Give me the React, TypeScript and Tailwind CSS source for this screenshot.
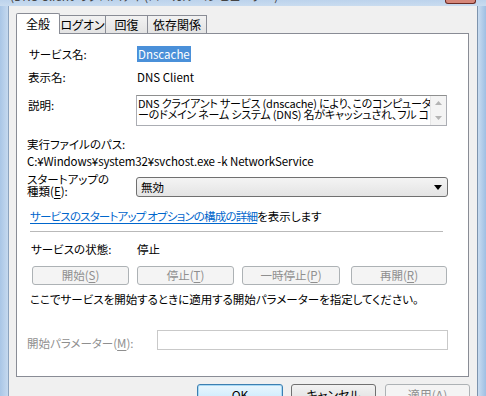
const FONT = "font-['Noto_Sans_CJK_JP','Noto_Sans',sans-serif] [font-feature-settings:'palt']";

const TABS = [
  { label: '全般', width: 'w-[44px]', active: true },
  { label: 'ログオン', width: 'w-[46px]', active: false },
  { label: '回復', width: 'w-[42px]', active: false },
  { label: '依存関係', width: 'w-[59px]', active: false },
];

function Mn({ k }: { k: string }) {
  return (
    <>
      (<span className="underline underline-offset-2">{k}</span>)
    </>
  );
}

function DisabledButton({ className, children }: { className: string; children: React.ReactNode }) {
  return (
    <div
      className={`h-[19px] rounded-[3px] border border-[#adb2b5] bg-[#f4f4f4] text-[#8f8f8f] leading-[17px] text-center ${className}`}
    >
      {children}
    </div>
  );
}

export default function App() {
  return (
    <div className={`w-[486px] h-[396px] overflow-hidden flex flex-col bg-[#b7cfe9] text-black ${FONT}`}>
      {/* title bar bottom edge */}
      <div className="h-[6px] shrink-0 flex items-start overflow-hidden bg-gradient-to-b from-[#bcd3ec] to-[#c9dcef]">
        <div className="ml-[10px] -mt-[10px] text-[12px] leading-[12px] text-[#444] whitespace-nowrap">
          (DNS Client のプロパティ (ローカル コンピューター)
        </div>
        <div className="ml-auto mr-[10px] w-[31px] h-[4px] bg-[#d6877a] border-x border-b border-[#6b2b25] rounded-b-[3px]" />
      </div>

      <div className="flex flex-1 min-h-0 overflow-hidden">
        {/* left frame */}
        <div className="w-[8px] shrink-0 bg-gradient-to-r from-[#a9c6e6] to-[#c5d9ef]" />

        {/* dialog body */}
        <div className="w-[469px] shrink-0 bg-[#f0f0f0] border-l border-[#8ca3be] pl-[7px] pt-[7px]">
          {/* tabs */}
          <div className="relative z-10 flex items-end h-[20px] text-[12px]">
            {TABS.map((t) =>
              t.active ? (
                <div
                  key={t.label}
                  className={`${t.width} h-[21px] -mb-px bg-white border-l border-t border-r border-[#898c95] rounded-t-[2px] leading-[19px] text-center`}
                >
                  {t.label}
                </div>
              ) : (
                <div
                  key={t.label}
                  className={`${t.width} h-[18px] border-t border-r border-[#898c95] bg-gradient-to-b from-[#f2f2f2] to-[#e3e3e3] leading-[17px] text-center`}
                >
                  {t.label}
                </div>
              )
            )}
          </div>

          {/* tab panel */}
          <div className="w-[453px] h-[344px] border border-[#898c95] bg-white pl-[10px] text-[11.5px]">
            <div className="flex h-[16px] mt-[12px] leading-[16px]">
              <div className="w-[109px] pl-[2px]">サービス名:</div>
              <div className="pl-px">
                <span className="bg-[#4a90d9] text-white px-px">Dnscache</span>
              </div>
            </div>

            <div className="flex h-[16px] mt-[7px] leading-[16px]">
              <div className="w-[109px] pl-px">表示名:</div>
              <div className="pl-px">DNS Client</div>
            </div>

            <div className="flex mt-[10px]">
              <div className="w-[109px] pt-[2px] pl-px leading-[16px]">説明:</div>
              <div className="w-[311px] h-[31px] border border-[#abadb3] border-t-[#8e8f8f] flex overflow-hidden">
                <div className="flex-1 pl-[1px] pt-[2px] text-[11px] leading-[11px] overflow-hidden whitespace-nowrap tracking-[-0.2px]">
                  <div>DNS クライアント サービス (dnscache) により、このコンピュータ</div>
                  <div>ーのドメイン ネーム システム (DNS) 名がキャッシュされ、フル コ</div>
                </div>
                <div className="w-[16px] shrink-0 bg-[#f4f4f4] border-l border-[#e6e6e6] flex flex-col items-center justify-between py-[5px]">
                  <svg width="7" height="4" viewBox="0 0 7 4">
                    <path d="M0 4 L3.5 0 L7 4 Z" fill="#b4b4b4" />
                  </svg>
                  <svg width="7" height="4" viewBox="0 0 7 4">
                    <path d="M0 0 L3.5 4 L7 0 Z" fill="#b4b4b4" />
                  </svg>
                </div>
              </div>
            </div>

            <div className="mt-[10px] h-[16px] leading-[16px]">実行ファイルのパス:</div>
            <div className="mt-px h-[16px] leading-[16px] tracking-[-0.1px]">C:¥Windows¥system32¥svchost.exe -k NetworkService</div>

            <div className="flex mt-[3px]">
              <div className="w-[109px] leading-[12px] pt-px">
                スタートアップの
                <br />
                種類<Mn k="E" />:
              </div>
              <div className="mt-[5px] w-[312px] h-[20px] rounded-[3px] border border-[#707070] bg-gradient-to-b from-[#f4f4f4] to-[#e4e4e4] flex items-center pl-[4px] pr-[5px]">
                <span className="flex-1 leading-[16px]">無効</span>
                <svg width="8" height="5" viewBox="0 0 8 5">
                  <path d="M0 0 L8 0 L4 5 Z" fill="#000" />
                </svg>
              </div>
            </div>

            <div className="mt-[11px] pl-[3px] h-[16px] leading-[16px] whitespace-nowrap">
              <span className="text-[#0066cc] underline underline-offset-2 tracking-[-0.8px]">サービスのスタートアップ オプションの構成の詳細</span>
              を表示します
            </div>

            <div className="mt-[7px] ml-[3px] w-[413px] h-px bg-[#b9b9b9]" />

            <div className="flex h-[16px] mt-[9px] leading-[16px]">
              <div className="w-[109px] pl-[4px]">サービスの状態:</div>
              <div className="pl-px">停止</div>
            </div>

            <div className="flex mt-[9px] ml-[5px]">
              <DisabledButton className="w-[97px]">
                開始<Mn k="S" />
              </DisabledButton>
              <DisabledButton className="w-[97px] ml-[8px]">
                停止<Mn k="T" />
              </DisabledButton>
              <DisabledButton className="w-[98px] ml-[8px]">
                一時停止<Mn k="P" />
              </DisabledButton>
              <DisabledButton className="w-[96px] ml-[11px]">
                再開<Mn k="R" />
              </DisabledButton>
            </div>

            <div className="mt-[6px] pl-[3px] h-[16px] leading-[16px] whitespace-nowrap">
              ここでサービスを開始するときに適用する開始パラメーターを指定してください。
            </div>

            <div className="flex mt-[23px]">
              <div className="w-[130px] pt-[5px] leading-[16px] text-[#8f8f8f]">
                開始パラメーター<Mn k="M" />:
              </div>
              <div className="w-[291px] h-[20px] border border-[#c9c9c9] bg-white" />
            </div>
          </div>

          {/* dialog buttons */}
          <div className="flex mt-[7px] ml-[181px] text-[12px]">
            <div className="w-[86px] h-[23px] rounded-[3px] border border-[#3c7fb1] bg-gradient-to-b from-[#eaf6fd] to-[#bee6fd] shadow-[inset_0_0_0_1px_#a7d9f5] text-center leading-[20px]">
              OK
            </div>
            <div className="w-[85px] h-[23px] ml-[8px] rounded-[3px] border border-[#707070] bg-gradient-to-b from-[#f2f2f2] to-[#dcdcdc] text-center leading-[20px]">
              キャンセル
            </div>
            <div className="w-[85px] h-[23px] ml-[9px] rounded-[3px] border border-[#adb2b5] bg-[#f4f4f4] text-[#8f8f8f] text-center leading-[20px]">
              適用<Mn k="A" />
            </div>
          </div>
        </div>

        {/* right frame */}
        <div className="w-[9px] shrink-0 border-l border-[#7d93ad] bg-gradient-to-r from-[#c9dcf0] to-[#9ebfe3]" />
      </div>
    </div>
  );
}
